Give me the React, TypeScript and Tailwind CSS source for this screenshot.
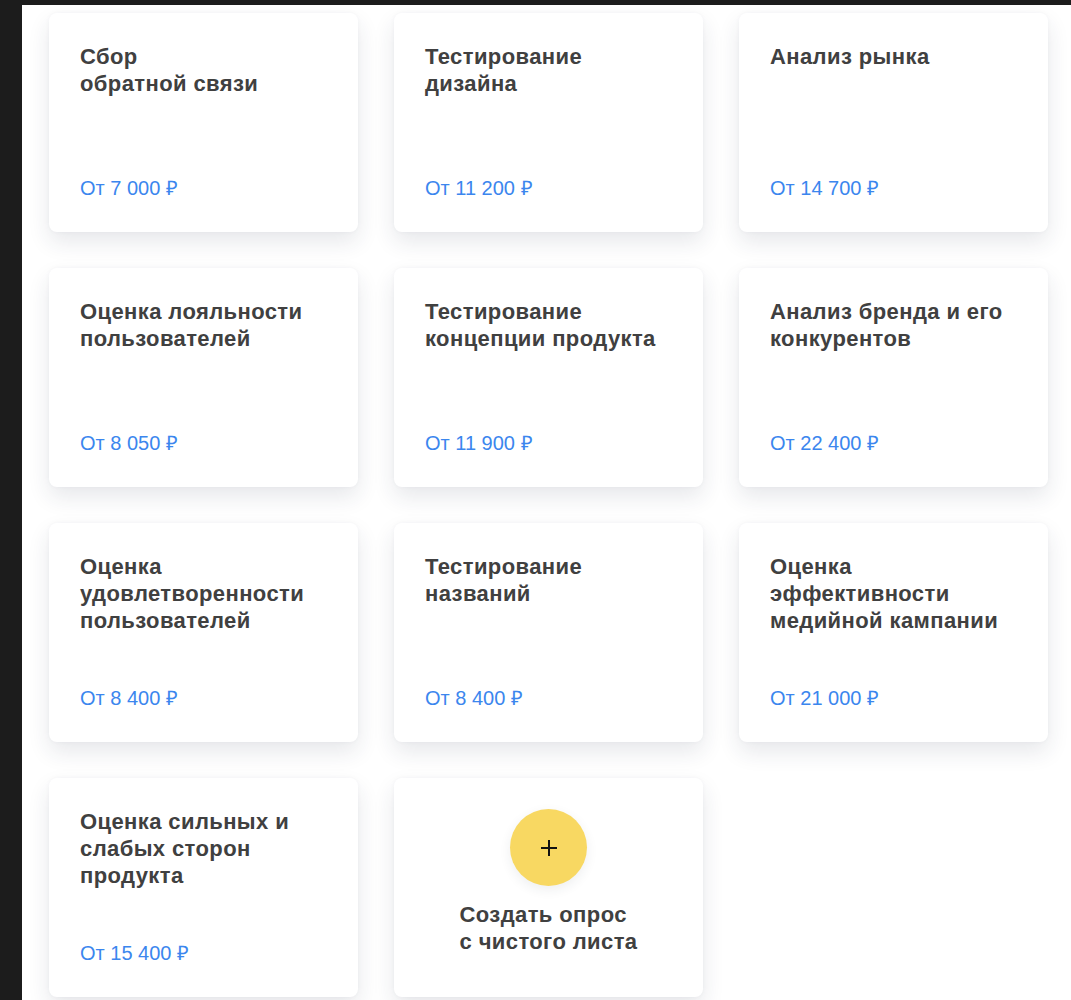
import React from 'react';

type Survey = {
  title: string[];
  price: string;
};

const surveys: Survey[] = [
  { title: ['Сбор', 'обратной связи'], price: 'От 7 000 ₽' },
  { title: ['Тестирование', 'дизайна'], price: 'От 11 200 ₽' },
  { title: ['Анализ рынка'], price: 'От 14 700 ₽' },
  { title: ['Оценка лояльности', 'пользователей'], price: 'От 8 050 ₽' },
  { title: ['Тестирование', 'концепции продукта'], price: 'От 11 900 ₽' },
  { title: ['Анализ бренда и его', 'конкурентов'], price: 'От 22 400 ₽' },
  { title: ['Оценка', 'удовлетворенности', 'пользователей'], price: 'От 8 400 ₽' },
  { title: ['Тестирование', 'названий'], price: 'От 8 400 ₽' },
  { title: ['Оценка', 'эффективности', 'медийной кампании'], price: 'От 21 000 ₽' },
  { title: ['Оценка сильных и', 'слабых сторон', 'продукта'], price: 'От 15 400 ₽' },
];

const cardClass =
  'h-[219px] rounded-[8px] bg-white shadow-[0_10px_22px_rgba(40,50,70,0.11),0_0_4px_rgba(40,50,70,0.04)]';

const titleClass = 'text-[22px] font-bold leading-[27px] tracking-[0.4px] text-[#404040]';

const SurveyCard: React.FC<{ survey: Survey }> = ({ survey }) => (
  <div className={`${cardClass} flex flex-col justify-between pl-[31px] pr-3 pt-[30px] pb-[32px]`}>
    <div className={titleClass}>
      {survey.title.map((line) => (
        <div key={line}>{line}</div>
      ))}
    </div>
    <div className="text-[20px] leading-[24px] text-[#3b86ee]">{survey.price}</div>
  </div>
);

const CreateCard: React.FC = () => (
  <div className={`${cardClass} flex flex-col items-center pt-[31px]`}>
    <div className="flex h-[77px] w-[77px] items-center justify-center rounded-full bg-[#f8d862] shadow-[0_4px_12px_rgba(40,50,70,0.08)]">
      <svg width="18" height="18" viewBox="0 0 18 18" fill="none">
        <path d="M9 1v16M1 9h16" stroke="#111" strokeWidth="2" />
      </svg>
    </div>
    <div className={`mt-[15px] ${titleClass}`}>
      <div>Создать опрос</div>
      <div>с чистого листа</div>
    </div>
  </div>
);

const App: React.FC = () => {
  return (
    <div
      className="flex h-[1000px] w-[1071px] flex-col overflow-hidden bg-[#1c1c1c] pt-[5px] pl-[22px]"
      style={{ fontFamily: '"Liberation Sans", Arial, sans-serif' }}
    >
      <div className="flex-1 bg-white pt-[8px] pl-[27px]">
        <div className="grid grid-cols-[repeat(3,309px)] gap-x-[36px] gap-y-[36px]">
          {surveys.map((s) => (
            <SurveyCard key={s.title.join(' ')} survey={s} />
          ))}
          <CreateCard />
        </div>
      </div>
    </div>
  );
};

export default App;
